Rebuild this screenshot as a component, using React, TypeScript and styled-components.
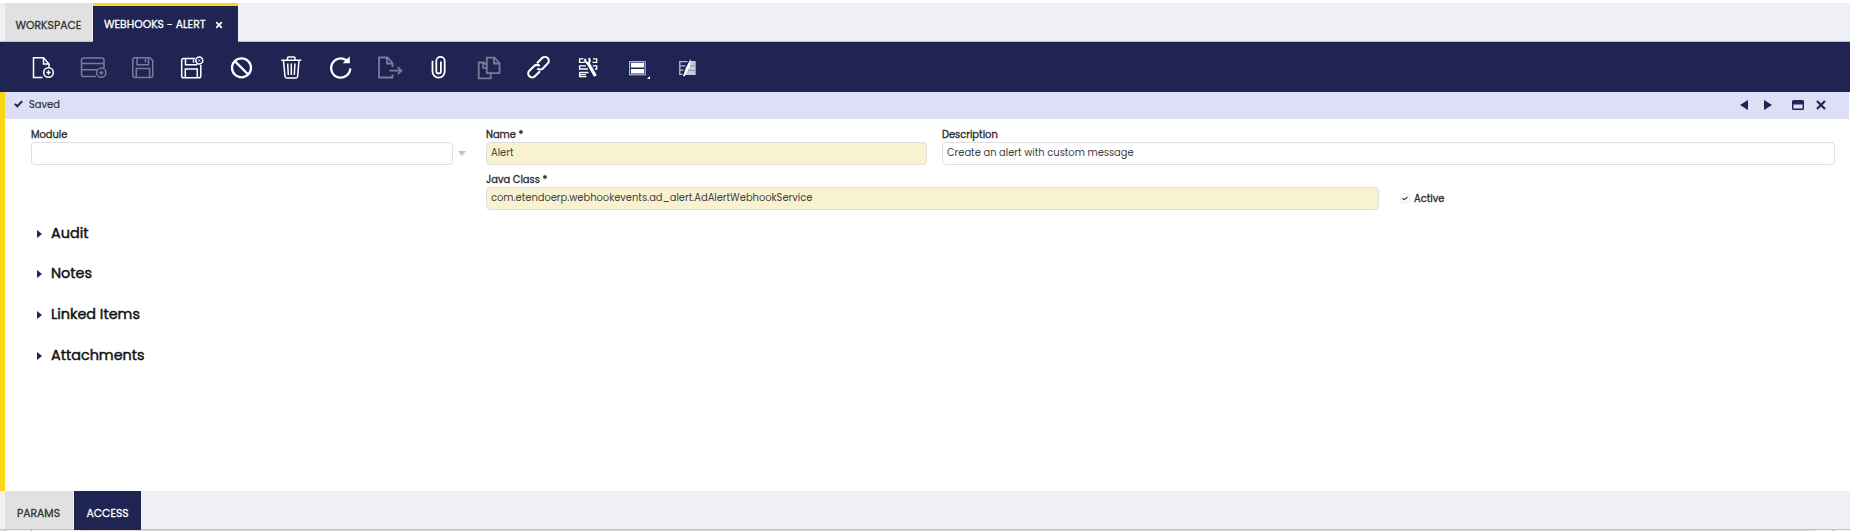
import React from "react";
import styled, { createGlobalStyle } from "styled-components";

const NAVY = "#202452";
const PALE = "#eff0f6";
const YELLOW = "#fad614";

const Global = createGlobalStyle`
  *, *::before, *::after { box-sizing: border-box; }
  body { margin: 0; background: #fff; font-family: Poppins, Inter, sans-serif; }
`;

const Page = styled.div`
  display: flex;
  flex-direction: column;
  width: 1850px;
  height: 531px;
  padding-top: 3px;
  overflow: hidden;
  color: #333;
  font-size: 9.9px;
`;

const TabBar = styled.div`
  display: flex;
  flex: none;
  gap: 1px;
  height: 39px;
  padding-left: 5px;
  background: ${PALE};
  border-bottom: 1px solid #bfc0c8;
`;

const Tab = styled.div<{ $width: number; $active?: boolean; $accent?: boolean }>`
  display: flex;
  align-items: center;
  flex: none;
  width: ${(p) => p.$width}px;
  height: ${(p) => (p.$active ? 39 : 38)}px;
  border-top: ${(p) => (p.$accent ? `3px solid ${YELLOW}` : "0")};
  background: ${(p) => (p.$active ? NAVY : "#e1e1e1")};
  color: ${(p) => (p.$active ? "#fff" : "#333")};
  font-size: 10.8px;
  -webkit-text-stroke: 0.3px currentColor;
  line-height: 18px;
  white-space: nowrap;
`;

const TabLabel = styled.span<{ $left: number; $top: number }>`
  padding-left: ${(p) => p.$left}px;
  padding-top: ${(p) => p.$top}px;
`;

const TabClose = styled.svg`
  width: 8px;
  height: 8px;
  margin: 1px 15px 0 auto;
`;

const Toolbar = styled.div`
  display: flex;
  flex: none;
  height: 50px;
  padding-left: 18px;
  background: ${NAVY};
`;

const ToolButton = styled.svg<{ $dim?: boolean }>`
  width: 50px;
  height: 50px;
  fill: none;
  stroke: #fff;
  stroke-width: 1.5;
  opacity: ${(p) => (p.$dim ? 0.4 : 1)};
`;

const View = styled.div`
  display: flex;
  flex-direction: column;
  height: 399px;
  border-left: 5px solid ${YELLOW};
`;

const StatusBar = styled.div`
  display: flex;
  align-items: center;
  height: 27px;
  margin-right: 1px;
  padding: 0 23px 1px 9px;
  background: #dddff6;
`;

const StatusText = styled.span`
  flex: 1;
  padding-left: 6px;
  line-height: 18px;
  font-size: 9.9px;
  -webkit-text-stroke: 0.2px currentColor;
`;

const StatusIcon = styled.svg<{ $width: number; $gap?: number }>`
  width: ${(p) => p.$width}px;
  height: 10px;
  margin-left: ${(p) => p.$gap ?? 0}px;
  fill: ${NAVY};
`;

const Form = styled.div`
  display: grid;
  grid-template-columns: 455px 456px 456px 437px;
  grid-template-rows: 45px 42px;
  padding: 6px 0 0 26px;
`;

const Field = styled.div<{ $column: string }>`
  grid-column: ${(p) => p.$column};
`;

const Label = styled.div`
  height: 17px;
  line-height: 20px;
  -webkit-text-stroke: 0.32px currentColor;
  color: #2b2b2b;
`;

const Input = styled.div<{ $width: number; $required?: boolean }>`
  width: ${(p) => p.$width}px;
  height: 23px;
  padding-left: 4px;
  border: 1px solid #dfdfe0;
  border-radius: 4px;
  background: ${(p) => (p.$required ? "#f9f2d0" : "#fff")};
  line-height: 19px;
  color: #404040;
`;

const SelectRow = styled.div`
  display: flex;
  align-items: center;
  gap: 5px;
  width: 436px;
`;

const CheckRow = styled.div`
  display: flex;
  align-items: center;
  gap: 4px;
  padding: 19px 0 0 2px;
  line-height: 20px;
  -webkit-text-stroke: 0.32px currentColor;
  color: #2b2b2b;
`;

const CheckBox = styled.div`
  display: flex;
  align-items: center;
  justify-content: center;
  width: 10px;
  height: 10px;
  margin-bottom: 2px;
  border: 1px solid #ececef;
  border-radius: 2px;
`;

const Sections = styled.div`
  display: flex;
  flex-direction: column;
  padding: 1px 0 0 32px;
`;

const Section = styled.div`
  display: flex;
  align-items: center;
  gap: 9px;
  height: 40.6px;
  font-size: 14.4px;
  -webkit-text-stroke: 0.45px currentColor;
  color: #111;
`;

const SectionArrow = styled.svg`
  width: 5px;
  height: 8px;
  margin-top: 1px;
  fill: ${NAVY};
`;

const GridTop = styled.div`
  display: flex;
  flex: none;
  height: 1px;
`;

const GridCell = styled.div<{ $width: number; $color: string }>`
  width: ${(p) => p.$width}px;
  background: ${(p) => p.$color};
`;

const tools: { name: string; dim?: boolean; art: React.ReactNode }[] = [
  {
    name: "new",
    art: (
      <>
        <path d="M24.5 35.5H15.5V15.7H25.5L31 22V25M25.5 15.7V22H31" />
        <circle cx="30.5" cy="30.5" r="4.8" />
        <path d="M30.5 28.3V32.7M28.3 30.5H32.7" />
      </>
    ),
  },
  {
    name: "new-row",
    dim: true,
    art: (
      <>
        <path d="M28 34.5H15.5Q13.5 34.5 13.5 32.5V18Q13.5 16 15.5 16H34Q36 16 36 18V26M13.5 21.5H36M13.5 27.8H29" />
        <circle cx="33.3" cy="30.7" r="4.6" />
        <path d="M33.3 28.7V32.7M31.3 30.7H35.3" />
      </>
    ),
  },
  {
    name: "save",
    dim: true,
    art: (
      <>
        <path d="M16.5 15.7H32L34.7 18.5V33.5Q34.7 35.5 32.7 35.5H16.8Q14.8 35.5 14.8 33.5V17.7Q14.8 15.7 16.8 15.7Z" />
        <path d="M19 16V22.8H30.5V16M27.5 17V20.5M18.3 35V26.5H31.5V35" />
      </>
    ),
  },
  {
    name: "save-close",
    art: (
      <>
        <path d="M27 16.5H15.5Q13.7 16.5 13.7 18.3V34Q13.7 35.8 15.5 35.8H31Q32.8 35.8 32.8 34V23" />
        <path d="M17.5 17V22.7H28.5V22M25.5 17.5V20.5M17.3 35V27H29.3V35" />
        <circle cx="31.3" cy="18.5" r="3.5" />
        <path d="M30.3 17.5L32.3 19.5M32.3 17.5L30.3 19.5" strokeWidth="1" />
      </>
    ),
  },
  {
    name: "undo",
    art: (
      <g strokeWidth="2.3">
        <circle cx="23.5" cy="25.8" r="9.5" />
        <path d="M16.8 19.1L30.2 32.5" />
      </g>
    ),
  },
  {
    name: "delete",
    art: (
      <>
        <path d="M13.2 18.2H33.3M19.5 18V16Q19.5 15 20.5 15H26Q27 15 27 16V18" />
        <path d="M15.5 18.5L17 34.5Q17.2 36 18.6 36H28Q29.4 36 29.6 34.5L31 18.5" />
        <path d="M19.7 21.5L20.3 33M23.3 21.5V33M26.9 21.5L26.3 33" />
      </>
    ),
  },
  {
    name: "refresh",
    art: (
      <>
        <path d="M28.3 18.2A9.6 9.6 0 1 0 32.3 26.4" strokeWidth="2.2" />
        <path d="M31.8 14.3V21.3H24.8L27.3 18.6L25.6 17.2L29.4 16.8Z" fill="#fff" stroke="none" />
      </>
    ),
  },
  {
    name: "export",
    dim: true,
    art: (
      <path
        d="M24.5 32.5V35.5H11V15.5H19.5L24.5 21V25M19 16V21.5H24.5M21.5 28.7H33M29.8 25.2L33.3 28.7L29.8 32.2"
        strokeWidth="1.8"
      />
    ),
  },
  {
    name: "attach",
    art: (
      <path
        d="M14.5 18.8V29.5A6.1 6.1 0 0 0 26.7 29.5V19A4.2 4.2 0 0 0 18.3 19V29.2A2.3 2.3 0 0 0 22.9 29.2V19.5"
        strokeWidth="1.8"
      />
    ),
  },
  {
    name: "copy",
    dim: true,
    art: (
      <g strokeWidth="1.8">
        <path d="M22.7 31.5V36.3H10.7V20.5H16L18.8 23.2M15.2 20.8V25.8H18.8" />
        <path d="M18.8 31.2V15.7H26.5L31.5 21V31.2ZM26 16V21.5H31.5" />
      </g>
    ),
  },
  {
    name: "link",
    art: (
      <g transform="translate(20.5 25.2) rotate(-45)" strokeWidth="2.1">
        <path d="M-1.8 3.9H-9A3.9 3.9 0 0 1 -9 -3.9H-2.2A3.9 3.9 0 0 1 1.7 0" />
        <path d="M1.8 -3.9H9A3.9 3.9 0 0 1 9 3.9H2.2A3.9 3.9 0 0 1 -1.7 0" />
      </g>
    ),
  },
  {
    name: "process",
    art: (
      <>
        <g strokeWidth="1.3">
          <path d="M15.5 16.8H11.6V20.3H16.5M25 16.8H28.7V20.3H24.5" />
          <path d="M18 23.8H11.6V27H20M24.8 23.8H28.7V27H27" />
          <path d="M20.5 30.5H11.6V34.7H18.5M11.6 32.6H18" />
        </g>
        <path d="M19.8 20.5L27.4 34" strokeWidth="3.2" />
        <path d="M17.2 16.8V19.4L19.6 21.2L21.8 19.4L21.2 16" strokeWidth="2" />
      </>
    ),
  },
  {
    name: "view",
    art: (
      <>
        <rect x="11.6" y="19.6" width="15.6" height="13.2" strokeWidth="1.1" stroke="#b9bbcd" />
        <path d="M13 20.8H26V25.6H13ZM13 26.9H26V31.6H13Z" fill="#fff" stroke="none" />
        <path d="M32 34V37H29Z" fill="#fff" stroke="none" />
      </>
    ),
  },
  {
    name: "hide-view",
    art: (
      <>
        <path d="M19.5 19.6H11.8V32.3H14.5M11.8 23.8H17.3M11.8 28.2H15.5" stroke="#b9bbcd" strokeWidth="1.3" />
        <path d="M22 19H27.7V33H16.3Z" fill="#c9cad8" stroke="none" />
        <path d="M22 23.8H27.2M20 28.4H27.2" stroke="#8b8da8" strokeWidth="1" />
        <path d="M22.6 16.8L22 24L16.8 34.2H15L17.8 26Z" fill="#fff" stroke="none" />
      </>
    ),
  },
];

const sections = ["Audit", "Notes", "Linked Items", "Attachments"];

export default function App() {
  return (
    <Page>
      <Global />
      <TabBar>
        <Tab $width={87}>
          <TabLabel $left={10.5} $top={8}>WORKSPACE</TabLabel>
        </Tab>
        <Tab $width={145} $active $accent>
          <TabLabel $left={11} $top={1}>WEBHOOKS - ALERT</TabLabel>
          <TabClose viewBox="0 0 8 8" fill="none" stroke="#fff" strokeWidth="1.7">
            <path d="M1.2 1.2L6.8 6.8M6.8 1.2L1.2 6.8" />
          </TabClose>
        </Tab>
      </TabBar>
      <Toolbar>
        {tools.map((tool) => (
          <ToolButton key={tool.name} $dim={tool.dim} viewBox="0 0 50 50">
            {tool.art}
          </ToolButton>
        ))}
      </Toolbar>
      <View>
        <StatusBar>
          <StatusIcon $width={9} viewBox="0 0 9 10">
            <path d="M.8 3.9L3.3 6.3L8.2 1.1" fill="none" stroke={NAVY} strokeWidth="2" />
          </StatusIcon>
          <StatusText>Saved</StatusText>
          <StatusIcon $width={8} viewBox="0 0 8 10">
            <path d="M8 0V10L0 5Z" />
          </StatusIcon>
          <StatusIcon $width={8} $gap={16} viewBox="0 0 8 10">
            <path d="M0 0V10L8 5Z" />
          </StatusIcon>
          <StatusIcon $width={12} $gap={20} viewBox="0 0 12 10">
            <path fillRule="evenodd" d="M1.5 0H10.5Q12 0 12 1.5V8.5Q12 10 10.5 10H1.5Q0 10 0 8.5V1.5Q0 0 1.5 0ZM1.4 4.6V8.6H10.6V4.6Z" />
          </StatusIcon>
          <StatusIcon $width={10} $gap={12} viewBox="0 0 10 10">
            <path d="M1 1L9 9M9 1L1 9" stroke={NAVY} strokeWidth="2.2" />
          </StatusIcon>
        </StatusBar>
        <Form>
          <Field $column="1">
            <Label>Module</Label>
            <SelectRow>
              <Input $width={422} />
              <svg width="8" height="5" viewBox="0 0 8 5" fill="#c4c4c4">
                <path d="M0 0H8L4 5Z" />
              </svg>
            </SelectRow>
          </Field>
          <Field $column="2">
            <Label>Name *</Label>
            <Input $width={441} $required>Alert</Input>
          </Field>
          <Field $column="3 / 5">
            <Label>Description</Label>
            <Input $width={893}>Create an alert with custom message</Input>
          </Field>
          <Field $column="2 / 4">
            <Label>Java Class *</Label>
            <Input $width={893} $required>com.etendoerp.webhookevents.ad_alert.AdAlertWebhookService</Input>
          </Field>
          <Field $column="4">
            <CheckRow>
              <CheckBox>
                <svg width="6" height="5" viewBox="0 0 6 5" fill="none" stroke={NAVY} strokeWidth="1.1">
                  <path d="M.5 2.2L2.2 3.8L5.5 .8" />
                </svg>
              </CheckBox>
              Active
            </CheckRow>
          </Field>
        </Form>
        <Sections>
          {sections.map((title) => (
            <Section key={title}>
              <SectionArrow viewBox="0 0 5 8">
                <path d="M0 0L5 4L0 8Z" />
              </SectionArrow>
              {title}
            </Section>
          ))}
        </Sections>
      </View>
      <TabBar>
        <Tab $width={68}>
          <TabLabel $left={12} $top={8}>PARAMS</TabLabel>
        </Tab>
        <Tab $width={67} $active>
          <TabLabel $left={12.5} $top={6}>ACCESS</TabLabel>
        </Tab>
      </TabBar>
      <GridTop>
        <GridCell $width={5} $color="#dddff6" />
        <GridCell $width={1} $color="#a5a6ae" />
        <GridCell $width={25} $color="#f4f4f6" />
        <GridCell $width={1} $color="#a5a6ae" />
        <GridCell $width={49} $color="#f4f4f6" />
        <GridCell $width={1} $color="#a5a6ae" />
        <GridCell $width={1733} $color="#dcdcdd" />
        <GridCell $width={18} $color="#f6f6f8" />
        <GridCell $width={1} $color="#8c8d96" />
        <GridCell $width={16} $color="#f6f6f8" />
      </GridTop>
    </Page>
  );
}
